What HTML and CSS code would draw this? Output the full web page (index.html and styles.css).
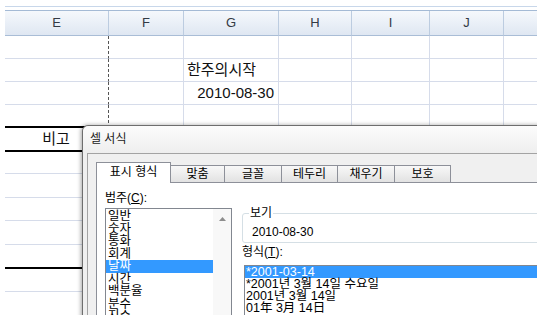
FILE: index.html
```html
<!DOCTYPE html>
<html lang="ko">
<head>
<meta charset="UTF-8">
<title>셀 서식</title>
<link rel="stylesheet" href="styles.css">
</head>
<body>
<div class="screen">
  <div class="sheet">
    <div class="row head">
      <div>E</div><div>F</div><div>G</div><div>H</div><div>I</div><div>J</div><div></div>
    </div>
    <div class="row"><div class="brk"></div><div></div><div></div><div></div><div></div><div></div><div></div></div>
    <div class="row"><div class="brk"></div><div></div><div class="txt">한주의시작</div><div></div><div></div><div></div><div></div></div>
    <div class="row"><div class="brk"></div><div></div><div class="txt num">2010-08-30</div><div></div><div></div><div></div><div></div></div>
    <div class="row"><div class="brk bold"></div><div></div><div></div><div></div><div></div><div></div><div></div></div>
    <div class="row"><div class="txt mid bold">비고</div><div></div><div></div><div></div><div></div><div></div><div></div></div>
    <div class="row"><div></div><div></div><div></div><div></div><div></div><div></div><div></div></div>
    <div class="row tall"><div></div><div></div><div></div><div></div><div></div><div></div><div></div></div>
    <div class="row"><div></div><div></div><div></div><div></div><div></div><div></div><div></div></div>
    <div class="row tall"><div></div><div></div><div></div><div></div><div></div><div></div><div></div></div>
    <div class="row tall"><div class="bold"></div><div></div><div></div><div></div><div></div><div></div><div></div></div>
    <div class="row"><div></div><div></div><div></div><div></div><div></div><div></div><div></div></div>
    <div class="row tall"><div></div><div></div><div></div><div></div><div></div><div></div><div></div></div>
  </div>

  <div class="dialog">
    <div class="dialog-title">셀 서식</div>
    <div class="dialog-body">
      <div class="tabs">
        <div class="tab active">표시 형식</div>
        <div class="tab w55">맞춤</div>
        <div class="tab w58">글꼴</div>
        <div class="tab w57">테두리</div>
        <div class="tab w58">채우기</div>
        <div class="tab w57">보호</div>
      </div>
      <div class="page">
        <div class="category">
          <div class="label">범주(<u>C</u>):</div>
          <div class="listbox">
            <div class="items">
              <div>일반</div>
              <div>숫자</div>
              <div>통화</div>
              <div>회계</div>
              <div class="sel">날짜</div>
              <div>시간</div>
              <div>백분율</div>
              <div>분수</div>
              <div>지수</div>
            </div>
            <div class="scrollbar">
              <svg width="7" height="4" viewBox="0 0 7 4"><path d="M0 4 L3.5 0 L7 4 Z" fill="#8d8d8d"/></svg>
            </div>
          </div>
        </div>
        <div class="detail">
          <fieldset class="preview">
            <legend>보기</legend>
            <div class="value">2010-08-30</div>
          </fieldset>
          <div class="label">형식(<u>T</u>):</div>
          <div class="formats">
            <div class="sel">*2001-03-14</div>
            <div>*2001년 3월 14일 수요일</div>
            <div>2001년 3월 14일</div>
            <div>01年 3月 14日</div>
          </div>
        </div>
      </div>
    </div>
  </div>
</div>
</body>
</html>
```

FILE: styles.css
```css
body {
  margin: 0;
  background: #fff;
  font-family: "Liberation Sans", "Noto Sans CJK KR", sans-serif;
}
.screen {
  position: relative;
  margin: 6px 0 0 5px;
  width: 532px;
  height: 309px;
  overflow: hidden;
}
.sheet {
  border-top: 1px solid #c8d7ea;
  padding-top: 3px;
}
.row {
  display: grid;
  grid-template-columns: 104px 75px 95px 73px 78px 74px 60px;
  height: 23px;
}
.row.tall {
  height: 24px;
}
.row > div {
  box-sizing: border-box;
  border-right: 1px solid #d6dcea;
  border-bottom: 1px solid #d6dcea;
}
.row.head {
  height: 25px;
  border-top: 1px solid #a4bad5;
}
.row.head > div {
  background: linear-gradient(#f5f8fc, #dfe7f2);
  border-right: 1px solid #bccce0;
  border-bottom: 1px solid #a9bdd6;
  text-align: center;
  font-size: 13px;
  line-height: 23px;
  color: #333a44;
}
.row > .brk {
  border-right: 1px dashed #555;
}
.row > .bold {
  border-bottom: 2px solid #000;
}
.txt {
  font-size: 15px;
  line-height: 22px;
  color: #111;
  padding: 0 4px 0 3px;
}
.txt.num {
  text-align: right;
}
.txt.mid {
  text-align: center;
}

.dialog {
  position: absolute;
  left: 77px;
  top: 119px;
  width: 480px;
  height: 220px;
  box-sizing: border-box;
  border: 1px solid #6e6e6e;
  border-radius: 6px 6px 0 0;
  background: #efefef;
  box-shadow: -1px 0 4px rgba(0, 0, 0, 0.35);
  font-size: 12px;
  color: #000;
}
.dialog-title {
  height: 27px;
  line-height: 27px;
  padding-left: 7px;
  font-size: 12px;
  color: #222;
  border-radius: 6px 6px 0 0;
  background: linear-gradient(#fcfcfc, #eeeeee);
}
.dialog-body {
  margin-left: 4px;
  border-left: 1px solid #a3a3a3;
  border-top: 1px solid #a3a3a3;
  background: #f0f0f0;
  padding: 8px 0 0 8px;
  height: 200px;
}
.tabs {
  display: flex;
  align-items: flex-end;
  height: 20px;
}
.tab {
  box-sizing: border-box;
  height: 17px;
  border: 1px solid #8d9099;
  border-bottom: none;
  margin-left: -1px;
  background: linear-gradient(#f8f8f8, #e2e2e2);
  text-align: center;
  line-height: 16px;
}
.tab.active {
  position: relative;
  z-index: 1;
  width: 75px;
  height: 21px;
  margin: 0 0 -1px 0;
  background: #fff;
  line-height: 19px;
}
.w55 { width: 55px; }
.w57 { width: 57px; }
.w58 { width: 58px; }
.page {
  display: flex;
  border: 1px solid #8d9099;
  background: #fff;
  padding-left: 8px;
  height: 170px;
}
.label {
  line-height: 16px;
  white-space: nowrap;
}
.category {
  flex: none;
  width: 127px;
  padding-top: 7px;
}
.listbox {
  display: flex;
  margin-top: 2px;
  border: 1px solid #828790;
  height: 120px;
}
.items {
  flex: 1;
  padding-top: 1px;
  font-size: 12.5px;
  line-height: 12.5px;
}
.items div {
  padding-left: 2px;
}
.sel {
  background: #3399ff;
  color: #fff;
}
.scrollbar {
  width: 18px;
  background: #f8f8f8;
  text-align: center;
  padding-top: 8px;
  line-height: 0;
}
.detail {
  flex: 1;
  min-width: 0;
  margin-left: 10px;
  padding-top: 23px;
}
.preview {
  margin: 0;
  padding: 0 0 2px 6px;
  min-width: 0;
  width: 400px;
  border: 1px solid #d5dfe5;
  border-radius: 3px;
}
.preview legend {
  padding: 0 1px;
  line-height: 14px;
}
.preview .value {
  padding: 4px 0 0 3px;
  line-height: 16px;
}
.detail .label {
  margin-top: 1px;
}
.formats {
  margin: 5px 0 0 2px;
  width: 400px;
  height: 60px;
  border: 1px solid #828790;
  font-size: 12.5px;
  line-height: 12px;
  white-space: nowrap;
}
.formats div {
  padding-left: 1px;
}
```
